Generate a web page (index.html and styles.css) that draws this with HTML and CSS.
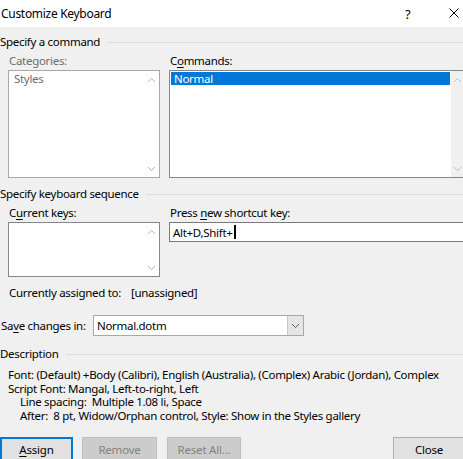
FILE: index.html
```html
<!DOCTYPE html>
<html lang="en">
<head>
  <meta charset="UTF-8" />
  <title>Customize Keyboard</title>
  <link rel="stylesheet" href="styles.css">
</head>
<body>
<div class="dialog">

  <!-- Title bar -->
  <header class="titlebar">
    <span class="title">Customize Keyboard</span>
    <span class="help">?</span>
    <span class="close-x">
      <svg width="10" height="10" viewBox="0 0 10 10"><path d="M0.5 0.5 L9.5 9.5 M9.5 0.5 L0.5 9.5" stroke="#000" stroke-width="1" fill="none"/></svg>
    </span>
  </header>

  <main class="content">

    <!-- Command -->
    <div class="group-head"><span>Specify a command</span></div>
    <div class="cols">
      <div class="field narrow">
        <label class="disabled">Categories:</label>
        <div class="listbox tall disabled">
          <div class="items"><div class="item">Styles</div></div>
          <div class="scroll plain">
            <svg width="9" height="6" viewBox="0 0 9 6"><path d="M1 5 L4.5 1.5 L8 5" stroke="#b4b4b4" fill="none"/></svg>
            <svg width="9" height="6" viewBox="0 0 9 6"><path d="M1 1 L4.5 4.5 L8 1" stroke="#b4b4b4" fill="none"/></svg>
          </div>
        </div>
      </div>
      <div class="field wide">
        <label>C<u>o</u>mmands:</label>
        <div class="listbox tall">
          <div class="items"><div class="item selected">Normal</div></div>
          <div class="scroll">
            <svg width="9" height="6" viewBox="0 0 9 6"><path d="M1 5 L4.5 1.5 L8 5" stroke="#c4c4c4" fill="none"/></svg>
            <svg width="9" height="6" viewBox="0 0 9 6"><path d="M1 1 L4.5 4.5 L8 1" stroke="#c4c4c4" fill="none"/></svg>
          </div>
        </div>
      </div>
    </div>

    <!-- Keyboard sequence -->
    <div class="group-head seq"><span>Specify keyboard sequence</span></div>
    <div class="cols">
      <div class="field narrow">
        <label>C<u>u</u>rrent keys:</label>
        <div class="listbox short">
          <div class="items"></div>
          <div class="scroll plain">
            <svg width="9" height="6" viewBox="0 0 9 6"><path d="M1 5 L4.5 1.5 L8 5" stroke="#b4b4b4" fill="none"/></svg>
            <svg width="9" height="6" viewBox="0 0 9 6"><path d="M1 1 L4.5 4.5 L8 1" stroke="#b4b4b4" fill="none"/></svg>
          </div>
        </div>
      </div>
      <div class="field wide">
        <label>Press <u>n</u>ew shortcut key:</label>
        <div class="textbox">Alt+D,Shift+<span class="caret"></span></div>
      </div>
    </div>

    <p class="assigned">Currently assigned to:<span class="value">[unassigned]</span></p>

    <div class="save-row">
      <span class="save-label">Sa<u>v</u>e changes in:</span>
      <div class="combo">
        <span class="combo-text">Normal.dotm</span>
        <span class="combo-btn">
          <svg width="9" height="6" viewBox="0 0 9 6"><path d="M1 1 L4.5 4.5 L8 1" stroke="#606060" fill="none"/></svg>
        </span>
      </div>
    </div>

    <!-- Description -->
    <div class="group-head desc-head"><span>Description</span></div>
    <div class="desc">
      <p>Font: (Default) +Body (Calibri), English (Australia), (Complex) Arabic (Jordan), Complex</p>
      <p>Script Font: Mangal, Left-to-right, Left</p>
      <p class="indent">Line spacing:&nbsp; Multiple 1.08 li, Space</p>
      <p class="indent">After:&nbsp; 8 pt, Widow/Orphan control, Style: Show in the Styles gallery</p>
    </div>

    <div class="buttons">
      <button class="btn default"><u>A</u>ssign</button>
      <button class="btn" disabled>Remove</button>
      <button class="btn reset" disabled>Reset All...</button>
      <button class="btn close">Close</button>
    </div>

  </main>
</div>
</body>
</html>
```

FILE: styles.css
```css
/* --- RESET & BASE --- */
* { margin: 0; padding: 0; box-sizing: border-box; }
body {
  background: #f0f0f0;
  color: #000;
  font-family: 'Noto Sans', 'Open Sans', sans-serif;
  font-size: 11.5px;
  letter-spacing: -0.3px;
  width: 463px;
  height: 459px;
  overflow: hidden;
  white-space: nowrap;
}
u { text-decoration-thickness: 1px; text-underline-offset: 2px; }

.dialog {
  width: 465px;
}

/* Title bar */
.titlebar {
  height: 27px;
  background: #fff;
  display: flex;
  align-items: center;
  padding-left: 1px;
}
.title {
  flex: 1;
  font-size: 12px;
}
.help {
  width: 12px;
  margin-right: 32px;
  font-size: 13px;
}
.close-x {
  width: 16px;
  display: flex;
  align-items: center;
  padding-bottom: 1px;
}

.content {
  padding-top: 7px;
}

/* Group headings with a rule */
.group-head {
  display: flex;
  align-items: center;
  height: 16px;
  line-height: 16px;
}
.group-head::after {
  content: '';
  flex: 1;
  border-top: 1px solid #dcdcdc;
  margin-left: 7px;
}
.group-head.seq { margin-top: 8px; }
.group-head.desc-head { margin-top: 10px; }

.cols {
  display: flex;
  gap: 9px;
  padding-left: 8px;
  margin-top: 3px;
}
.field.narrow { width: 152px; }
.field.wide { flex: 1; }
.field label {
  display: block;
  height: 16px;
  line-height: 16px;
  padding-left: 1px;
  margin-bottom: 1px;
}
label.disabled { color: #6d6d6d; }

/* List boxes */
.listbox {
  display: flex;
  background: #fff;
  border: 1px solid #828790;
}
.listbox.tall { height: 108px; }
.listbox.short { height: 55px; }
.listbox.disabled { border-color: #a8a8a8; }
.items {
  flex: 1;
  padding: 1px;
}
.item {
  height: 13px;
  line-height: 13px;
  padding-left: 3px;
}
.listbox.disabled .item { color: #6d6d6d; padding-left: 4px; }
.item.selected {
  background: #0078d7;
  color: #fff;
}
.scroll {
  width: 13px;
  background: #f0f0f0;
  display: flex;
  flex-direction: column;
  justify-content: space-between;
  align-items: center;
  padding: 6px 0 5px;
}
.scroll.plain { background: #fff; width: 16px; }

/* Text box */
.textbox {
  height: 20px;
  background: #fff;
  border: 1px solid #7a7a7a;
  display: flex;
  align-items: center;
  padding-left: 3px;
}
.caret {
  display: inline-block;
  width: 2px;
  height: 14px;
  margin-left: 1px;
  background: #000;
}

.assigned {
  padding-left: 9px;
  margin-top: 8px;
  height: 16px;
  line-height: 16px;
}
.assigned .value { margin-left: 10px; }

/* Save row */
.save-row {
  display: flex;
  align-items: center;
  margin-top: 14px;
  padding-left: 1px;
}
.save-label { width: 92px; }
.combo {
  width: 211px;
  height: 21px;
  display: flex;
  background: #fff;
  border: 1px solid #a8a8a8;
}
.combo-text {
  flex: 1;
  line-height: 19px;
  padding-left: 3px;
}
.combo-btn {
  width: 16px;
  background: #e5e5e5;
  border-left: 1px solid #c8c8c8;
  display: flex;
  align-items: center;
  justify-content: center;
}

/* Description */
.desc {
  padding-left: 8px;
  margin-top: 6px;
  line-height: 13.5px;
}
.desc .indent { padding-left: 12px; }

/* Buttons */
.buttons {
  display: flex;
  margin-top: 15px;
}
.btn {
  height: 24px;
  font-family: inherit;
  font-size: 11.5px;
  letter-spacing: -0.2px;
  background: #e1e1e1;
  border: 1px solid #adadad;
  color: #000;
}
.btn.default {
  width: 73px;
  border: 2px solid #0078d7;
}
.btn[disabled] {
  width: 75px;
  margin-left: 9px;
  background: #cccccc;
  border-color: #bfbfbf;
  color: #838383;
}
.btn.reset { width: 74px; margin-left: 10px; }
.btn.close {
  width: 72px;
  margin-left: auto;
}
```
